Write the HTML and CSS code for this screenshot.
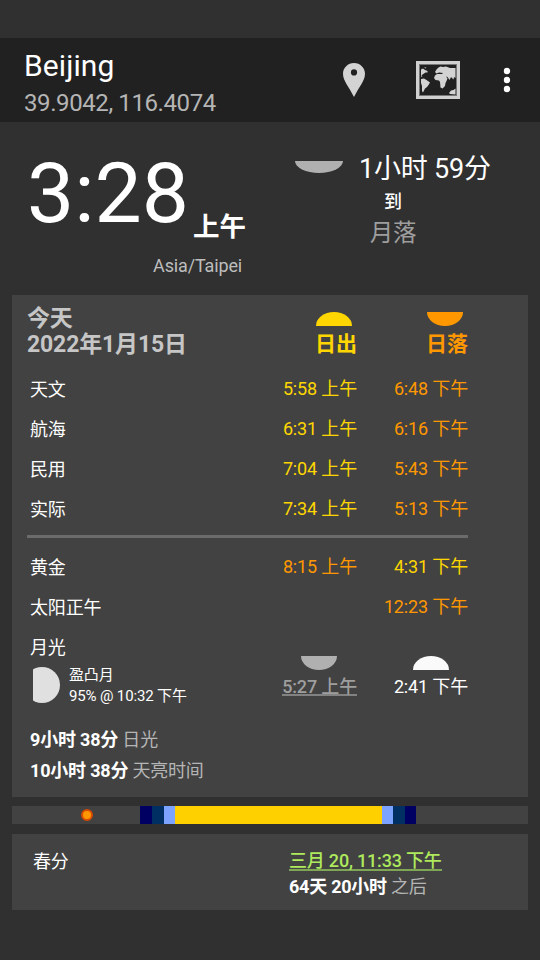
FILE: index.html
```html
<!DOCTYPE html>
<html lang="zh-CN">
<head>
<meta charset="utf-8">
<title>Beijing</title>
<link rel="stylesheet" href="styles.css">
</head>
<body>
<header class="appbar">
  <div class="place">
    <h1>Beijing</h1>
    <p>39.9042, 116.4074</p>
  </div>
  <svg class="pin" viewBox="0 0 22 34" width="22" height="34"><path fill="#d3d3d3" fill-rule="evenodd" d="M11 0C4.900 0 0 4.800 0 10.800C0 18 6 24 11 34C16 24 22 18 22 10.800C22 4.800 17.100 0 11 0ZM11 6.300A3.100 3.100 0 1 1 11 12.500A3.100 3.100 0 1 1 11 6.300Z"/></svg>
  <svg class="map" viewBox="0 0 44 38" width="44" height="38">
    <rect x="1.500" y="1.500" width="41" height="35" fill="none" stroke="#d0d0d0" stroke-width="3"/>
    <rect x="3.500" y="3.500" width="37" height="31" fill="none" stroke="#777" stroke-width="1"/>
    <g fill="#d3d3d3">
      <path d="M5 8.500L7 7.500L9 9L11.500 10L11.500 11.500L9.500 11.500L8 12.500L6.500 13.500L5.500 14.500L6.500 16L5 15.500Z"/>
      <path d="M8 6.500L10.500 6.500L9.500 7.500Z"/>
      <path d="M5 18L8 17.500L10.500 19L14 21.500L12.500 24L11 26L9 27.500L8 29.500L7 31.500L6 30L6 25L5 22Z"/>
      <path d="M19 11L20.500 8.500L22.500 6.500L24.500 5.500L27 6L30 5.500L34 7L39.500 7V17L38 16L37.500 18.500L35 16L33.500 19L31.500 16L30 15.500L31.500 17.500L30.500 20L29.500 22L29 25L26.500 27.500L24.500 26.500L24 21L23 19.500L19.500 19L18 17L19 14.500L21 13L26 13L27 12L23 11.500L20.500 12.500Z"/>
      <path d="M33 32L35 29.500L37.500 29L39.500 27.500V33.500L34 33Z"/>
    </g>
  </svg>
  <svg class="more" viewBox="0 0 8 26" width="8" height="26"><g fill="#fff"><circle cx="4" cy="4" r="3.200"/><circle cx="4" cy="13" r="3.200"/><circle cx="4" cy="22" r="3.200"/></g></svg>
</header>

<section class="clock">
  <div class="now">
    <div class="time">3:28<span>上午</span></div>
    <div class="zone">Asia/Taipei</div>
  </div>
  <div class="next">
    <div class="remain"><i class="half down wide"></i><span>1小时 59分</span></div>
    <div class="to">到</div>
    <div class="event">月落</div>
  </div>
</section>

<main class="card today">
  <div class="head">
    <h2>今天<br>2022年1月15日</h2>
    <div class="col sunrise"><i class="half up"></i><b>日出</b></div>
    <div class="col sunset"><i class="half down"></i><b>日落</b></div>
  </div>
  <div class="row"><span>天文</span><span class="yellow">5:58 上午</span><span class="orange">6:48 下午</span></div>
  <div class="row"><span>航海</span><span class="yellow">6:31 上午</span><span class="orange">6:16 下午</span></div>
  <div class="row"><span>民用</span><span class="yellow">7:04 上午</span><span class="orange">5:43 下午</span></div>
  <div class="row"><span>实际</span><span class="yellow">7:34 上午</span><span class="orange">5:13 下午</span></div>
  <div class="rule"></div>
  <div class="row"><span>黄金</span><span class="orange">8:15 上午</span><span class="yellow">4:31 下午</span></div>
  <div class="row"><span>太阳正午</span><span></span><span class="orange">12:23 下午</span></div>
  <div class="moon">
    <div class="moon-info">
      <div class="moon-title">月光</div>
      <div class="phase">
        <svg viewBox="0 0 27 36" width="27" height="36"><circle cx="9" cy="18" r="18" fill="#e0e0e0"/></svg>
        <div>盈凸月<br>95% @ 10:32 下午</div>
      </div>
    </div>
    <div class="moon-time set"><i class="half down"></i><span>5:27 上午</span></div>
    <div class="moon-time rise"><i class="half up"></i><span>2:41 下午</span></div>
  </div>
  <div class="length"><b>9小时 38分</b> 日光</div>
  <div class="length"><b>10小时 38分</b> 天亮时间</div>
</main>

<div class="daybar">
  <i class="night"></i><i class="astro"></i><i class="nautical"></i><i class="civil"></i><i class="day"></i><i class="civil"></i><i class="nautical last"></i><i class="astro end"></i>
  <i class="marker"></i>
</div>

<section class="card season">
  <div class="name">春分</div>
  <div class="when">
    <div class="date">三月 20, 11:33 下午</div>
    <div><b>64天 20小时</b> <span>之后</span></div>
  </div>
</section>
</body>
</html>
```
FILE: styles.css
```css
* { box-sizing: border-box; }
body {
  margin: 0;
  height: 960px;
  padding-top: 38px;
  overflow: hidden;
  background: #303030;
  color: #fff;
  font: 18px/40px Roboto, "Noto Sans CJK SC", sans-serif;
  letter-spacing: -0.15px;
}
h1, h2, p { margin: 0; font-weight: 400; }
i { display: block; }
svg { display: block; flex: none; }

.appbar {
  display: flex;
  align-items: flex-start;
  height: 84px;
  padding: 10px 29px 0 24px;
  background: #212121;
}
.place { width: 319px; }
.place h1 { font-size: 30px; line-height: 36px; letter-spacing: 0.1px; }
.place p { margin-top: 3px; font-size: 24px; line-height: 32px; letter-spacing: -0.4px; color: #b5b5b5; }
.pin { margin-top: 15px; }
.map { margin: 13px 0 0 51px; }
.more { margin: 19px 0 0 43px; }

.clock { display: flex; height: 173px; }
.now { width: 295px; padding: 30px 0 0 27px; }
.time { font-size: 84px; line-height: 84px; letter-spacing: 0; white-space: nowrap; }
.time span {
  position: relative;
  top: 14px;
  margin-left: 4px;
  font-size: 26.5px;
  font-weight: 700;
  line-height: 1;
}
.zone { width: 215px; margin-top: 14px; line-height: 32px; text-align: right; color: #bdbdbd; }
.next { padding-top: 30px; }
.remain { display: flex; height: 34px; font-size: 27px; line-height: 34px; }
.remain span { margin-left: 16px; letter-spacing: -0.2px; }
.to { width: 196px; margin-top: 4px; line-height: 24px; text-align: center; font-weight: 500; }
.event { width: 196px; margin-top: 3px; font-size: 23.5px; line-height: 32px; text-align: center; color: #9e9e9e; }

.half { width: 36px; height: 14px; }
.half.up { border-radius: 50% 50% 0 0 / 100% 100% 0 0; }
.half.down { border-radius: 0 0 50% 50% / 0 0 100% 100%; background: #b0b0b0; }
.half.wide { width: 48px; height: 12px; margin-top: 9px; }

.card { margin: 0 12px; background: #424242; }
.today { height: 502px; padding: 0 60px 0 18px; }
.head, .row, .moon { display: grid; grid-template-columns: 1fr 112px 111px; }
.head { height: 74px; padding-top: 10px; }
.head h2 { margin: 1px 0 0 -3px; font-size: 23px; font-weight: 700; line-height: 26px; color: #c6c6c6; }
.col { padding-top: 7px; }
.col .half { margin: 0 5px 5px auto; }
.col b { display: block; font-size: 21px; line-height: 26px; letter-spacing: 0; text-align: right; }
.sunrise { color: #ffd600; }
.sunrise .half { background: #ffd600; }
.sunset { color: #ff9800; }
.sunset .half.down { background: #ff9800; }
.row { height: 40px; }
.row span:first-child, .moon-title { padding-top: 1px; }
.row span + span { text-align: right; }
.yellow { color: #ffd600; }
.orange { color: #ff9800; }
.rule { height: 3px; margin: 6px 0 9px -3px; background: #6b6b6b; }

.moon { height: 97px; }
.moon-title { height: 40px; }
.phase { display: flex; gap: 9px; margin-left: 3px; font-size: 15px; line-height: 21px; white-space: nowrap; }
.phase div { margin-top: -2px; }
.moon-time { padding-top: 29px; text-align: right; }
.moon-time .half { margin: 0 19px 3px auto; }
.moon-time.set .half { margin-right: 20px; }
.moon-time span { display: inline-block; height: 23px; line-height: 28px; vertical-align: top; }
.set { color: #9e9e9e; font-weight: 500; }
.set span { border-bottom: 2px solid #828282; }
.rise .half { background: #fafafa; }
.length { line-height: 31px; letter-spacing: -0.2px; color: #b5b5b5; }
.length b { color: #fff; }

.daybar { position: relative; display: flex; height: 18px; margin: 9px 12px 10px; background: #424242; }
.night { width: 128px; }
.astro, .nautical { width: 12px; }
.astro { background: #000063; }
.nautical { background: #002f63; }
.civil { width: 11px; background: #7ca3ff; }
.day { width: 207px; background: #ffd000; }
.astro.end { width: 11px; }
.marker {
  position: absolute;
  left: 69px;
  top: 3px;
  width: 12px;
  height: 12px;
  border: 2px solid #d84a00;
  border-radius: 50%;
  background: #ff9800;
}

.season { display: flex; height: 76px; padding: 14px 0 0 21px; line-height: 26px; }
.name { width: 256px; padding-top: 1px; }
.date { width: max-content; height: 23px; margin-bottom: 3px; border-bottom: 2px solid #7fa655; letter-spacing: -0.2px; color: #aeea5c; font-weight: 500; }
.when { letter-spacing: -0.25px; }
.when span { color: #b5b5b5; }
```
